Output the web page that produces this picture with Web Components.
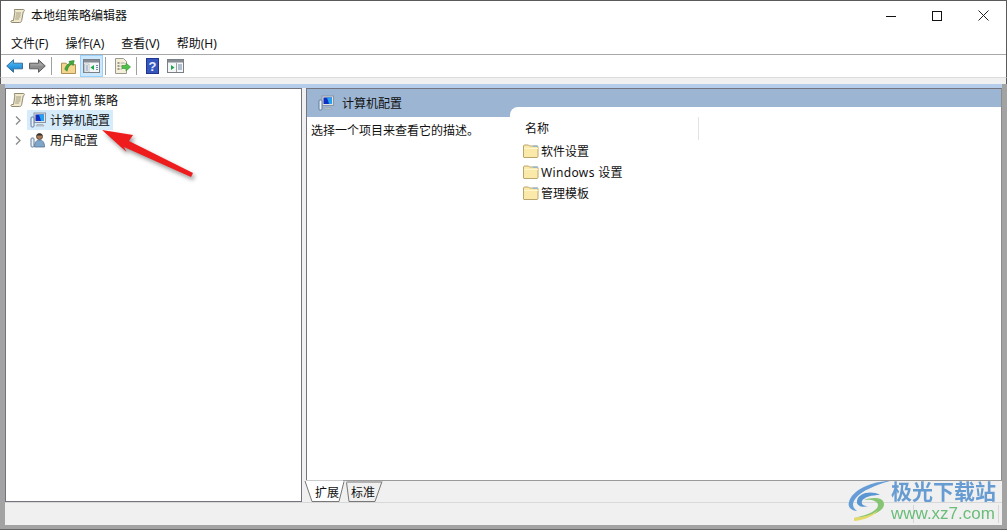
<!DOCTYPE html>
<html lang="zh-CN">
<head>
<meta charset="utf-8">
<title>本地组策略编辑器</title>
<style>
  html, body { margin: 0; height: 100%; overflow: hidden; }
  body { font: 12px "Noto Sans", "Noto Sans CJK SC", sans-serif; color: #111; }
</style>
</head>
<body>
<gp-window>
  <title-bar slot="title">本地组策略编辑器</title-bar>
  <menu-bar slot="menu">
    <span>文件(F)</span><span>操作(A)</span><span>查看(V)</span><span>帮助(H)</span>
  </menu-bar>
  <tool-bar slot="tools"></tool-bar>
  <tree-pane slot="tree">
    <tree-item icon="scroll" root>本地计算机 策略</tree-item>
    <tree-item icon="computer" arrow selected>计算机配置</tree-item>
    <tree-item icon="user" arrow>用户配置</tree-item>
  </tree-pane>
  <detail-pane slot="detail">
    <folder-row>软件设置</folder-row>
    <folder-row style="letter-spacing: .36px">Windows 设置</folder-row>
    <folder-row>管理模板</folder-row>
  </detail-pane>
  <status-bar slot="status"></status-bar>
</gp-window>
<red-arrow></red-arrow>
<site-mark></site-mark>

<script>
const ICONS = {
  scroll: `<svg width="16" height="16" viewBox="0 0 16 16"><path d="M4.500 1.500h9c1.200 0 1.200 2-.3 2.500l-1.500 8.500c-.3 1.500-1 2-2 2H2c-1.300 0-1.500-1.800 0-2h1.500L4.800 4c0-1-1-2.500-.3-2.500z" fill="#f1e9cd" stroke="#8f8a70"/><path d="M6 5h5M5.700 7h5M5.400 9h5M5.100 11h4" stroke="#a09a80"/></svg>`,
  computer: `<svg width="16" height="16" viewBox="0 0 16 16"><rect x="4" y="1" width="11.500" height="9.500" fill="#dfe3e8" stroke="#8c96a3"/><rect x="5.500" y="2.500" width="8.500" height="6.500" fill="#0e2fc0"/><path d="M9 2.500h5V9h-3z" fill="#27a0ee"/><path d="M7 12.500h6l1 1.500H6z" fill="#c6ccd3" stroke="#969ea8" stroke-width=".6"/><rect x="1" y="5" width="3" height="10" rx="1" fill="#eef1f4" stroke="#5f7f9f"/></svg>`,
  user: `<svg width="16" height="16" viewBox="0 0 16 16"><circle cx="9.500" cy="4.500" r="3" fill="#a87a58" stroke="#4a3a32" stroke-width=".8"/><path d="M6.500 3.500c.5-2.500 5.500-2.500 6 0z" fill="#30302e"/><path d="M4.500 15c0-5 2-7 5-7s5 2 5 7z" fill="#7fa6c8" stroke="#53718f" stroke-width=".8"/><rect x="1" y="6" width="3" height="9" rx="1" fill="#eef1f4" stroke="#5f7f9f"/></svg>`,
  back: `<svg width="17" height="14" viewBox="0 0 17 14"><defs><linearGradient id="b" x1="0" y1="0" x2="0" y2="1"><stop offset="0" stop-color="#5cc4f8"/><stop offset="1" stop-color="#0a78d0"/></linearGradient></defs><path d="M.7 7 7.500.7v3.500h9v5.600h-9v3.500z" fill="url(#b)" stroke="#3e6e96"/></svg>`,
  forward: `<svg width="17" height="14" viewBox="0 0 17 14"><path d="M16.300 7 9.500.7v3.500h-9v5.600h9v3.500z" fill="#8c8c8c" stroke="#5e5e5e"/><path d="M1.500 5.200h8.800V3l4 3.500H1.500z" fill="#a8a8a8"/></svg>`,
  up: `<svg width="15" height="15" viewBox="0 0 16 16"><path d="M.5 4.500h5l1 1.500h9v9.500H.5z" fill="#f3d58e" stroke="#a98a4c"/><path d="M4 11C5 7 7 5.500 9.500 4.500L8.500 2.500 14 1.500l-1 5.500-1.500-1.800C9 6.500 7 9 6.500 13z" fill="#3eaa3a" stroke="#2b7f2a" stroke-width=".6"/></svg>`,
  panelLeft: `<svg width="17" height="14" viewBox="0 0 17 14"><rect x=".5" y=".5" width="16" height="13" fill="#f4f6f8" stroke="#7a7f85"/><rect x="1" y="1" width="15" height="2.500" fill="#868c93"/><path d="M1.500 5h4.500v8H1.500z" fill="#fff" stroke="#9aa0a6" stroke-width=".6"/><path d="M11 6v5L7.500 8.500z" fill="#18a84a"/><path d="M2.500 7h2.500M2.500 9h2.500M2.500 11h2.500M13 6.500h2M13 8.500h2M13 10.500h2" stroke="#6f8aa6"/></svg>`,
  panelPlay: `<svg width="17" height="14" viewBox="0 0 17 14"><rect x=".5" y=".5" width="16" height="13" fill="#f4f6f8" stroke="#7a7f85"/><rect x="1" y="1" width="15" height="2.500" fill="#868c93"/><path d="M4 6v5L7.500 8.500z" fill="#18a84a"/><path d="M9.500 4v9" stroke="#9aa0a6"/><path d="M11 6h4M11 8h4M11 10h4" stroke="#6f8aa6"/></svg>`,
  doc: `<svg width="17" height="16" viewBox="0 0 17 16"><path d="M1.500.5h8l3 3v12h-11z" fill="#f3efd9" stroke="#9b9b90"/><path d="M3.500 5h2M3.500 8h2M3.500 11h2" stroke="#444"/><path d="M6.500 5h4M6.500 8h1.500M6.500 11h1.500" stroke="#aaa"/><path d="M8 7.500h4V5l4.500 4-4.500 4v-2.500H8z" fill="#4fc04a" stroke="#3a9a38" stroke-width=".7"/></svg>`,
  help: `<svg width="13" height="16" viewBox="0 0 13 16"><rect width="13" height="16" fill="#21358e"/><rect x="1" y="1" width="11" height="14" fill="#3556bc"/><text x="6.500" y="13" text-anchor="middle" font-family="Liberation Sans" font-weight="700" font-size="13" fill="#e8ecf8">?</text></svg>`,
  folder: `<svg width="16" height="14" viewBox="0 0 16 14"><path d="M.5 2c0-.5.5-1 1-1h4l1 1h8c.5 0 .5.500.5 1v9.500c0 .5-.5 1-1 1H1c-.3 0-.5-.3-.5-.5z" fill="#fbe9a9" stroke="#b9a66e"/><path d="M1 4.500h14" stroke="#fff6d0"/><rect x="10" y="1.500" width="4.500" height="1.500" fill="#8fb7dd"/></svg>`
};

class GpWindow extends HTMLElement {
  constructor() {
    super();
    this.attachShadow({ mode: "open" });
  }
  connectedCallback() {
    this.shadowRoot.innerHTML = `
      <style>
        :host { display: flex; flex-direction: column; width: 1007px; height: 530px; box-sizing: border-box; background: #a3a3a3; border-bottom: 1px solid #666; }
        .top { background: #fff; border: 1px solid #5a5a5a; border-bottom: 0; }
        .gap { height: 6px; background: #f0f0f0; border-top: 1px solid #dcdcdc; border-left: 1px solid #5a5a5a; border-right: 1px solid #5a5a5a; }
        .work { flex: 1; display: flex; flex-direction: column; padding: 0 5px 4px 5px; min-height: 0; }
        .strip { height: 4px; background: #b5cdea; }
        .split { flex: 1; display: flex; min-height: 0; background: #f0f0f0; }
        ::slotted([slot="tree"]) { width: 297px; }
        ::slotted([slot="detail"]) { flex: 1; margin-left: 4px; min-width: 0; }
      </style>
      <div class="top">
        <slot name="title"></slot>
        <slot name="menu"></slot>
        <slot name="tools"></slot>
      </div>
      <div class="gap"></div>
      <div class="work">
        <div class="strip"></div>
        <div class="split">
          <slot name="tree"></slot>
          <slot name="detail"></slot>
        </div>
        <slot name="status"></slot>
      </div>`;
  }
}

class TitleBar extends HTMLElement {
  constructor() {
    super();
    this.attachShadow({ mode: "open" });
  }
  connectedCallback() {
    this.shadowRoot.innerHTML = `
      <style>
        :host { display: flex; align-items: center; height: 29px; padding-left: 9px; }
        .name { margin-left: 5px; flex: 1; padding-bottom: 2px; }
        .ctl { width: 46px; height: 29px; display: flex; align-items: center; justify-content: center; }
        svg { display: block; }
        .ctls { display: flex; }
      </style>
      ${ICONS.scroll}
      <span class="name"><slot></slot></span>
      <div class="ctls">
        <div class="ctl"><svg width="10" height="10"><path d="M0 5.500h10" stroke="#111"/></svg></div>
        <div class="ctl"><svg width="10" height="10"><rect x=".5" y=".5" width="9" height="9" fill="none" stroke="#111"/></svg></div>
        <div class="ctl"><svg width="11" height="11"><path d="M.5.500l10 10M10.500.500l-10 10" stroke="#222"/></svg></div>
      </div>`;
  }
}

class MenuBar extends HTMLElement {
  constructor() {
    super();
    this.attachShadow({ mode: "open" });
  }
  connectedCallback() {
    this.shadowRoot.innerHTML = `
      <style>
        :host { display: flex; align-items: center; gap: 17px; padding: 1px 0 0 10px; box-sizing: border-box; border-bottom: 1px solid #a8a8a8; height: 25px; }
      </style>
      <slot></slot>`;
  }
}

class ToolBar extends HTMLElement {
  constructor() {
    super();
    this.attachShadow({ mode: "open" });
  }
  connectedCallback() {
    const btn = (name, cls = "") => `<div class="btn ${cls}">${ICONS[name]}</div>`;
    this.shadowRoot.innerHTML = `
      <style>
        :host { display: flex; align-items: center; height: 22px; padding-left: 2px; }
        .btn { width: 23px; height: 22px; box-sizing: border-box; display: flex; align-items: center; justify-content: center; }
        .on { background: #cce8ff; border: 1px solid #99d1ff; }
        .sep { width: 1px; height: 18px; background: #a0a0a0; margin: 0 5px 0 2px; }
        .sep.b { margin-right: 4px; }
        svg { display: block; }
      </style>
      ${btn("back")}${btn("forward")}<div class="sep"></div>
      ${btn("up")}${btn("panelLeft", "on")}<div class="sep"></div>
      ${btn("doc")}<div class="sep b"></div>
      ${btn("help")}${btn("panelPlay")}`;
  }
}

class TreePane extends HTMLElement {
  constructor() {
    super();
    this.attachShadow({ mode: "open" });
  }
  connectedCallback() {
    this.shadowRoot.innerHTML = `
      <style>
        :host { display: block; box-sizing: border-box; background: #fff; border: 1px solid #74747f; padding: 2px 0 0 0; }
      </style>
      <slot></slot>`;
  }
}

class TreeItem extends HTMLElement {
  constructor() {
    super();
    this.attachShadow({ mode: "open" });
  }
  connectedCallback() {
    const root = this.hasAttribute("root");
    const chevron = this.hasAttribute("arrow")
      ? `<svg class="chev" width="6" height="9"><path d="M1 .5l4 4-4 4" fill="none" stroke="#8a8a8a" stroke-width="1.300"/></svg>`
      : "";
    this.shadowRoot.innerHTML = `
      <style>
        :host { display: flex; align-items: center; height: ${root ? 17 : 20}px; margin-bottom: ${root ? 2 : 0}px; padding-left: ${root ? 3 : 9}px; }
        .chev { margin-right: 6px; flex: none; }
        .inner { display: flex; align-items: center; height: 100%; padding: 0 3px 0 ${root ? 1 : 3}px; gap: ${root ? 5 : 4}px; }
        :host([selected]) .inner { background: #d6ecfb; }
        svg { display: block; flex: none; }
      </style>
      ${chevron}
      <div class="inner">${ICONS[this.getAttribute("icon")]}<span><slot></slot></span></div>`;
  }
}

class FolderRow extends HTMLElement {
  constructor() {
    super();
    this.attachShadow({ mode: "open" });
  }
  connectedCallback() {
    this.shadowRoot.innerHTML = `
      <style>
        :host { display: flex; align-items: center; height: 21px; gap: 2px; padding-left: 13px; }
        svg { display: block; flex: none; }
      </style>
      ${ICONS.folder}<span><slot></slot></span>`;
  }
}

class DetailPane extends HTMLElement {
  constructor() {
    super();
    this.attachShadow({ mode: "open" });
  }
  connectedCallback() {
    this.shadowRoot.innerHTML = `
      <style>
        :host { display: flex; flex-direction: column; min-height: 0; }
        .box { flex: 1; display: flex; flex-direction: column; background: #fff; border: 1px solid #74747f; border-right: 1px solid #8c8c8c; border-bottom: 1px solid #9a9a9a; min-height: 0; }
        .head { height: 28px; flex: none; background: #9bb5d3; display: flex; align-items: flex-start; gap: 8px; padding: 6px 0 0 11px; box-sizing: border-box; }
        .head span { line-height: 17px; }
        .head svg { display: block; }
        .body { flex: 1; display: flex; min-height: 0; }
        .desc { width: 203px; flex: none; padding: 4px 0 0 4px; box-sizing: border-box; }
        .list { flex: 1; margin-top: -10px; background: #fff; border-top-left-radius: 8px; }
        .cols { display: flex; height: 33px; box-sizing: border-box; padding-top: 10px; }
        .col { width: 173px; padding-left: 15px; border-right: 1px solid #e3e3e3; height: 23px; line-height: 23px; }
        .tabs { height: 21px; flex: none; position: relative; display: flex; padding-left: 9px; gap: 12px; line-height: 23px; }
        .tabs svg { position: absolute; left: -2px; top: -1px; }
        .tabs span { position: relative; }
      </style>
      <div class="box">
        <div class="head">${ICONS.computer}<span>计算机配置</span></div>
        <div class="body">
          <div class="desc">选择一个项目来查看它的描述。</div>
          <div class="list">
            <div class="cols"><div class="col">名称</div></div>
            <slot></slot>
          </div>
        </div>
      </div>
      <div class="tabs">
        <svg width="90" height="23"><path d="M42.500 2.500l2.500 19H71l7-20" fill="#f0f0f0" stroke="#777"/><path d="M42.500 2h35" stroke="#777"/><path d="M1 1l7 20.500H35l5-20" fill="#fff" stroke="#777"/><path d="M2 1h37" stroke="#fff"/></svg>
        <span>扩展</span><span>标准</span>
      </div>`;
  }
}

class StatusBar extends HTMLElement {
  constructor() {
    super();
    this.attachShadow({ mode: "open" });
  }
  connectedCallback() {
    this.shadowRoot.innerHTML = `
      <style>
        :host { display: flex; height: 23px; box-sizing: border-box; background: #f0f0f0; border-top: 1px solid #d8d8d8; padding: 2px 0; }
        div { border-right: 1px solid #d5d5d5; }
        .a { width: 908px; }
        .b { width: 84px; }
      </style>
      <div class="a"></div><div class="b"></div>`;
  }
}

class RedArrow extends HTMLElement {
  constructor() {
    super();
    this.attachShadow({ mode: "open" });
  }
  connectedCallback() {
    this.shadowRoot.innerHTML = `
      <style>
        :host { position: absolute; left: 95px; top: 120px; display: block; }
        svg { display: block; overflow: visible; filter: drop-shadow(2px 3px 2px rgba(0,0,0,.4)); }
      </style>
      <svg width="105" height="65" viewBox="95 120 105 65"><path d="M102 130 133 135 129 141 193 173 191 177 124 147 126.500 152z" fill="#ee1c1c"/></svg>`;
  }
}

class SiteMark extends HTMLElement {
  constructor() {
    super();
    this.attachShadow({ mode: "open" });
  }
  connectedCallback() {
    this.shadowRoot.innerHTML = `
      <style>
        :host { position: absolute; left: 846px; top: 478px; display: flex; font-family: "Liberation Sans", "Noto Sans CJK SC", sans-serif; opacity: .92; }
        svg { display: block; flex: none; }
        .names { margin-left: -3px; display: flex; flex-direction: column; align-items: flex-start; }
        .cn { font-size: 21px; line-height: 24px; font-weight: 700; color: #5b95cf; margin-top: 2px; white-space: nowrap; }
        .en { font-size: 17px; line-height: 19px; color: #5fb86f; white-space: nowrap; }
      </style>
      <svg width="48" height="44" viewBox="0 0 48 44">
        <path d="M44 3C26 3 6 12 3 24c-2 6 4 9 8 9-4-3-6-7-1-13C15 13 30 7 44 3z" fill="#5b97d5"/>
        <path d="M34 17c-9-5-22-2-23 6-1 5 6 7 11 5-5 0-7-2-6-5 2-4 10-6 18-6z" fill="#4e8fd0"/>
        <path d="M18 22c8-3 20-3 20 4 0 8-14 13-30 14 13-3 24-7 24-13 0-4-7-6-14-5z" fill="#7dc26a"/>
        <path d="M8 40c10-1 18-3 24-8-3 5-12 10-24 11z" fill="#e2d85c"/>
      </svg>
      <div class="names"><div class="cn">极光下载站</div><div class="en">www.xz7.com</div></div>`;
  }
}

customElements.define("gp-window", GpWindow);
customElements.define("title-bar", TitleBar);
customElements.define("menu-bar", MenuBar);
customElements.define("tool-bar", ToolBar);
customElements.define("tree-pane", TreePane);
customElements.define("tree-item", TreeItem);
customElements.define("folder-row", FolderRow);
customElements.define("detail-pane", DetailPane);
customElements.define("status-bar", StatusBar);
customElements.define("red-arrow", RedArrow);
customElements.define("site-mark", SiteMark);
</script>
</body>
</html>
